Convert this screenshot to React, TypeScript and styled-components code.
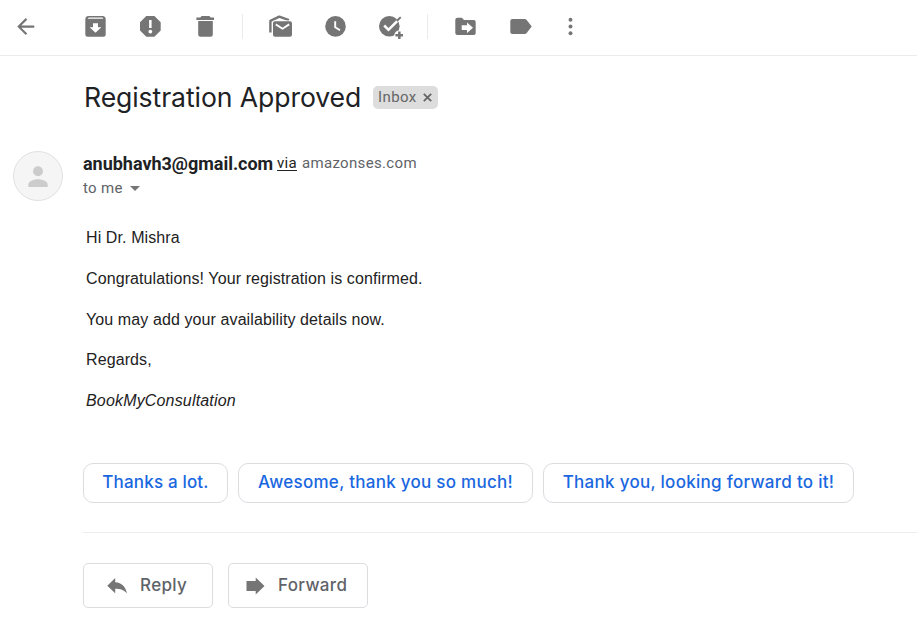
import React from "react";
import styled, { createGlobalStyle } from "styled-components";

const GlobalStyle = createGlobalStyle`
  * { box-sizing: border-box; }
  body { margin: 0; background: #fff; overflow: hidden; }
  button { background: none; border: 0; padding: 0; margin: 0; cursor: pointer; }
`;

const Page = styled.div`
  width: 917px;
  height: 642px;
  font-family: Roboto, sans-serif;
  color: #202124;
`;

const Toolbar = styled.header`
  display: flex;
  height: 56px;
  padding: 14px 0 0 13px;
  border-bottom: 1px solid #ebebeb;
`;

const ToolButton = styled.button<{ $gap?: number }>`
  flex: none;
  width: 26px;
  height: 26px;
  margin-left: ${(p) => p.$gap ?? 29}px;
`;

const Glyph = styled.svg`
  display: block;
  width: 26px;
  height: 26px;
  fill: #757575;
`;

const Divider = styled.span<{ $gap: number }>`
  width: 1px;
  height: 25px;
  margin-left: ${(p) => p.$gap}px;
  background: #e8eaed;
`;

const Subject = styled.section`
  display: flex;
  height: 95px;
  padding: 23px 0 0 84px;
`;

const Title = styled.h1`
  width: 289px;
  margin: 0;
  font: 400 26.6px/36px Inter, sans-serif;
  letter-spacing: -0.09px;
  white-space: nowrap;
`;

const Chip = styled.span`
  display: flex;
  align-items: center;
  width: 65px;
  height: 23px;
  margin-top: 7px;
  padding-left: 5px;
  border-radius: 5px;
  background: #ddd;
  color: #666;
  font-size: 15px;
  line-height: 23px;
  letter-spacing: 0.4px;
`;

const ChipClose = styled.svg`
  width: 9px;
  height: 9px;
  margin-left: 6px;
  stroke: #666;
  stroke-width: 1.8;
`;

const Sender = styled.section`
  display: flex;
  height: 73px;
  padding-left: 13px;
`;

const Avatar = styled.svg`
  width: 50px;
  height: 50px;
  margin-right: 20px;
`;

const SenderLine = styled.div`
  display: flex;
  height: 24px;
  line-height: 24px;
  white-space: nowrap;
`;

const Address = styled.strong`
  width: 194px;
  font-size: 18px;
  font-weight: 700;
  line-height: 26px;
  letter-spacing: -0.02px;
`;

const Via = styled.a`
  width: 25px;
  font-size: 15px;
  letter-spacing: 0.3px;
  color: #222;
  text-decoration: underline;
  text-underline-offset: 2px;
`;

const Muted = styled.span`
  font-size: 15px;
  letter-spacing: 0.33px;
  color: #5f6368;
`;

const Recipient = styled.div`
  display: flex;
  align-items: center;
  height: 25px;
`;

const Caret = styled.svg`
  width: 10px;
  height: 5px;
  margin: 1px 0 0 7.5px;
  fill: #757575;
`;

const Body = styled.article`
  height: 239px;
  padding: 4px 0 0 86px;
  font: 16px/20px "Liberation Sans", Arial, sans-serif;
  color: #222;
`;

const Paragraph = styled.p<{ $italic?: boolean; $space?: number }>`
  margin: 0 0 20.75px;
  font-style: ${(p) => (p.$italic ? "italic" : "normal")};
  letter-spacing: ${(p) => p.$space ?? 0.1}px;
`;

const Suggestions = styled.div`
  display: flex;
  height: 69px;
  padding-left: 83px;
`;

const Suggestion = styled.button<{ $width: number; $space: number }>`
  width: ${(p) => p.$width}px;
  height: 40px;
  margin-right: 10px;
  padding: 0 0 3px;
  border: 1px solid #dadce0;
  border-radius: 10px;
  color: #1967e0;
  font: 500 17px/24px Inter, sans-serif;
  letter-spacing: ${(p) => p.$space}px;
  white-space: nowrap;
`;

const Actions = styled.footer`
  display: flex;
  gap: 15px;
  margin-left: 83px;
  padding-top: 30px;
  border-top: 1px solid #ebeeef;
`;

const Action = styled.button<{ $width: number; $pad: number }>`
  display: flex;
  align-items: center;
  width: ${(p) => p.$width}px;
  height: 45px;
  padding: 0 0 1px ${(p) => p.$pad}px;
  border: 1px solid #dadce0;
  border-radius: 5px;
  color: #5f6368;
  font: 500 17px/24px Inter, sans-serif;
  letter-spacing: 0.35px;
`;

const ActionIcon = styled.svg<{ $gap: number }>`
  width: 20px;
  height: 18px;
  margin-top: 1px;
  margin-right: ${(p) => p.$gap}px;
  fill: #757575;
`;

function Tool({ label, gap, children }: { label: string; gap?: number; children: React.ReactNode }) {
  return (
    <ToolButton aria-label={label} $gap={gap}>
      <Glyph viewBox="0 0 26 26">{children}</Glyph>
    </ToolButton>
  );
}

export default function App() {
  return (
    <Page>
      <GlobalStyle />
      <Toolbar>
        <Tool label="Back" gap={0}>
          <path transform="scale(1.0625)" d="M20 10.9H7.83l5.59-5.59L12 3.8l-8 8 8 8 1.41-1.41L7.83 12.9H20z" />
        </Tool>
        <Tool label="Archive" gap={44}>
          <path fillRule="evenodd" d="M4.8 2h15.4q2.5.6 2.5 3v15.2q0 2.5-2.5 2.5H4.8q-2.5 0-2.5-2.5V5q0-2.4 2.5-3zM4.6 4.8h15.8l-1-1.3H5.6zM10 9.3v4H6.6l5.9 5.4 5.9-5.4H15v-4z" />
        </Tool>
        <Tool label="Report spam">
          <path fillRule="evenodd" d="M8.3 2h8.1l6.3 6.3v8.1l-6.3 6.3H8.3L2 16.4V8.3zM11.1 6v8h2.5V6zM12.35 15.7a1.9 1.9 0 1 0 .01 0z" />
        </Tool>
        <Tool label="Delete">
          <path d="M8.6 2h7.8l1.3 1.5H21V6H3.4V3.5h3.9zM5.2 7h14.6v13.2q0 2.5-2.5 2.5H7.7q-2.5 0-2.5-2.5z" />
        </Tool>
        <Divider $gap={23} />
        <Tool label="Mark as unread" gap={25}>
          <path d="M2.4 18.6V6.8L11.3 2.6 21 6.2" fill="none" stroke="#757575" strokeWidth="2.4" strokeLinejoin="round" />
          <rect x="4.3" y="6.6" width="20" height="17" rx="2" fill="#fff" />
          <rect x="5" y="7.3" width="19" height="15.4" rx="2" />
          <path d="M7.8 10.4l6.7 4.3 6.7-4.3" fill="none" stroke="#fff" strokeWidth="1.9" />
        </Tool>
        <Tool label="Snooze">
          <circle cx="12.5" cy="12.4" r="10.3" />
          <path d="M12.2 7.3v6l4.8 3" fill="none" stroke="#fff" strokeWidth="1.9" />
        </Tool>
        <Tool label="Add to tasks">
          <circle cx="11.3" cy="12.3" r="10.3" />
          <path d="M6.2 11.5l4.3 4.3L22.3 4" fill="none" stroke="#fff" strokeWidth="2.5" />
          <path d="M18.1 6.3l3.9-3.9 1.4 1.4-3.9 3.9z" />
          <circle cx="21.3" cy="21.3" r="4.9" fill="#fff" />
          <path d="M20.1 17.5h2.5v2.6H25v2.4h-2.4V25h-2.5v-2.5h-2.7v-2.4h2.7z" />
        </Tool>
        <Divider $gap={23} />
        <Tool label="Move to" gap={25}>
          <path fillRule="evenodd" d="M4.5 3.8h4.4L11 6.1h9.7q2 0 2 2V19q0 2-2 2H4.4q-2.1 0-2.1-2V5.8q0-2 2.2-2zM8.7 11.3v4.8H14v2.8l6-5.2-6-5.2v2.8z" />
        </Tool>
        <Tool label="Labels">
          <path d="M4.3 5h12.3q1.3 0 2.1 1l5 6.5-5 6.5q-.8 1-2.1 1H4.3q-2 0-2-2V7q0-2 2-2z" />
        </Tool>
        <Tool label="More" gap={24}>
          <circle cx="12.5" cy="5.7" r="1.95" />
          <circle cx="12.5" cy="12.5" r="1.95" />
          <circle cx="12.5" cy="19.3" r="1.95" />
        </Tool>
      </Toolbar>

      <Subject>
        <Title>Registration Approved</Title>
        <Chip>
          Inbox
          <ChipClose viewBox="0 0 9 9"><path d="M.8.8l7.4 7.4M8.2.8L.8 8.2" /></ChipClose>
        </Chip>
      </Subject>

      <Sender>
        <Avatar viewBox="0 0 50 50">
          <circle cx="25" cy="25" r="24.5" fill="#f5f5f5" stroke="#e0e0e0" />
          <circle cx="25" cy="20.3" r="5" fill="#ccc" />
          <path fill="#ccc" d="M15.3 36v-2.5c0-3.4 6.3-5.2 9.7-5.2s9.7 1.8 9.7 5.2V36z" />
        </Avatar>
        <div>
          <SenderLine>
            <Address>anubhavh3@gmail.com</Address>
            <Via>via</Via>
            <Muted>amazonses.com</Muted>
          </SenderLine>
          <Recipient>
            <Muted>to me</Muted>
            <Caret viewBox="0 0 10 5"><path d="M0 0h10L5 5z" /></Caret>
          </Recipient>
        </div>
      </Sender>

      <Body>
        <Paragraph>Hi Dr. Mishra</Paragraph>
        <Paragraph>Congratulations! Your registration is confirmed.</Paragraph>
        <Paragraph>You may add your availability details now.</Paragraph>
        <Paragraph>Regards,</Paragraph>
        <Paragraph $italic $space={0.17}>BookMyConsultation</Paragraph>
      </Body>

      <Suggestions>
        <Suggestion $width={145} $space={0.17}>Thanks a lot.</Suggestion>
        <Suggestion $width={295} $space={0.27}>Awesome, thank you so much!</Suggestion>
        <Suggestion $width={311} $space={0.28}>Thank you, looking forward to it!</Suggestion>
      </Suggestions>

      <Actions>
        <Action $width={130} $pad={23}>
          <ActionIcon $gap={13} viewBox="0 0 20 18">
            <path d="M.3 8.7L8.2 1v4.3C14.8 5.7 18.6 9.6 20 16.6c-3-3.6-6.5-4.8-11.8-4.8v4.5z" />
          </ActionIcon>
          Reply
        </Action>
        <Action $width={140} $pad={17}>
          <ActionIcon $gap={12} viewBox="0 0 20 18">
            <path d="M.5 4h9.2V.6L18.5 9l-8.8 8.4V14H.5z" />
          </ActionIcon>
          Forward
        </Action>
      </Actions>
    </Page>
  );
}
